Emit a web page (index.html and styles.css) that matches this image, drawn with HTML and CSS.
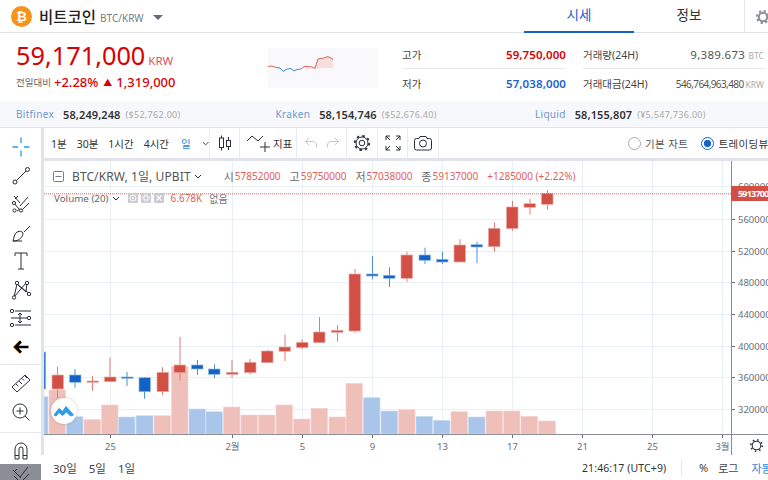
FILE: index.html
```html
<!DOCTYPE html>
<html lang="ko">
<head>
<meta charset="utf-8">
<title>비트코인 BTC/KRW</title>
<link rel="stylesheet" href="styles.css">
</head>
<body>
<div class="page">
  <header class="top">
    <div class="coin">
      <span class="coin-logo">₿</span>
      <span class="coin-name">비트코인</span>
      <span class="coin-pair">BTC/KRW</span>
      <span class="coin-caret"></span>
    </div>
    <nav class="tabs">
      <a class="tab tab-on">시세</a>
      <a class="tab">정보</a>
    </nav>
    <div class="top-gear">
      <svg width="16" height="16" viewBox="0 0 16 16"><circle cx="8" cy="8" r="4.2" fill="none" stroke="#8b8f99" stroke-width="2"/><circle cx="8" cy="8" r="6" fill="none" stroke="#8b8f99" stroke-width="2.2" stroke-dasharray="2.2 2.5"/></svg>
    </div>
  </header>

  <section class="summary">
    <div class="price-block">
      <div class="price-line"><span class="price">59,171,000</span><span class="price-unit">KRW</span></div>
      <div class="change-line"><span class="change-label">전일대비</span><span class="change-val">+2.28%</span><span class="change-tri">▲</span><span class="change-val">1,319,000</span></div>
    </div>
    <div class="spark">
      <svg width="110" height="40" viewBox="0 0 110 40">
        <path class="spark-area" d="M38 22 L46 20 L50 11 L56 10 L60 8.5 L65 10 L65 20 L38 20Z"/>
        <polyline class="spark-red" points="0,18.5 4,18 8,19.5"/>
        <polyline class="spark-blue" points="8,19.5 12,20 15,23.5 19,21 23,20.5 26,23 29,21.5 33,21"/>
        <polyline class="spark-red" points="33,21 36,18.5 40,18.5 44,19 47,20.5 50,11 56,10 60,8.5 65,11.5"/>
      </svg>
    </div>
    <div class="stats">
      <div class="stat"><span class="stat-label">고가</span><span class="stat-val is-red">59,750,000</span></div>
      <div class="stat"><span class="stat-label">거래량(24H)</span><span class="stat-num">9,389.673 <i class="stat-unit">BTC</i></span></div>
      <div class="stat"><span class="stat-label">저가</span><span class="stat-val is-blue">57,038,000</span></div>
      <div class="stat"><span class="stat-label">거래대금(24H)</span><span class="stat-long">546,764,963,480 <i class="stat-unit">KRW</i></span></div>
    </div>
  </section>

  <section class="exchanges">
    <div class="ex"><span class="ex-name">Bitfinex</span><b class="ex-price">58,249,248</b><span class="ex-sub">($52,762.00)</span></div>
    <div class="ex"><span class="ex-name">Kraken</span><b class="ex-price">58,154,746</b><span class="ex-sub">($52,676.40)</span></div>
    <div class="ex"><span class="ex-name">Liquid</span><b class="ex-price">58,155,807</b><span class="ex-sub">(¥5,547,736.00)</span></div>
  </section>

  <section class="terminal">
    <aside class="tools">
      <div class="tool-group tool-group-a">
        <div class="tool"><svg width="24" height="24" viewBox="0 0 24 24"><path class="ico-blue" d="M3.5 12H9M15 12h5.5M12 2.5V8M12 15.500V21.500"/></svg></div>
        <div class="tool"><svg width="24" height="24" viewBox="0 0 24 24"><path class="ico" d="M7.500 16.500 17 7"/><circle class="ico" cx="6" cy="18" r="2"/><circle class="ico" cx="18.500" cy="5.500" r="2"/></svg></div>
        <div class="tool"><svg width="24" height="24" viewBox="0 0 24 24"><path class="ico" d="M5 4l6 7M9 4 6 7M4 10l6 7M19 5l-8 9M20 11l-7 7M8 19l3-2"/><circle class="ico-fill" cx="5" cy="11" r="1.600"/><circle class="ico-fill" cx="5.500" cy="18.500" r="1.600"/><circle class="ico-fill" cx="12" cy="18.500" r="1.600"/></svg></div>
        <div class="tool"><svg width="24" height="24" viewBox="0 0 24 24"><path class="ico" d="M4 20c1-3 1-7 4-9 3-1.500 5-.5 6 1 0 3-2 6-6 7.500-1.500.5-3 .5-4 .5ZM15 11l6-6M4 20h9"/></svg></div>
        <div class="tool"><svg width="24" height="24" viewBox="0 0 24 24"><path class="ico" d="M6 7V4h12v3M12 4v16M9 20h6"/></svg></div>
        <div class="tool"><svg width="24" height="24" viewBox="0 0 24 24"><path class="ico" d="M5 19 8 6l9 8 1-9M8 6l10 8 2 1M5 19l12-14"/><circle class="ico-fill" cx="8" cy="5" r="1.700"/><circle class="ico-fill" cx="18" cy="5" r="1.700"/><circle class="ico-fill" cx="5" cy="19.500" r="1.700"/><circle class="ico-fill" cx="20" cy="16" r="1.700"/></svg></div>
        <div class="tool"><svg width="24" height="24" viewBox="0 0 24 24"><path class="ico" d="M6 5h16M2 12h16M6 19h16M11 7v10M9 9l2-2 2 2M9 15l2 2 2-2"/><circle class="ico-fill" cx="3" cy="5" r="1.700"/><circle class="ico-fill" cx="20" cy="12" r="1.700"/><circle class="ico-fill" cx="3" cy="19" r="1.700"/></svg></div>
        <div class="tool"><svg width="24" height="24" viewBox="0 0 24 24"><path class="ico-arrow-shadow" d="M19 12H6M11 6 5 12l6 6"/><path class="ico-arrow" d="M19.500 12H7M12 6.500 6.500 12l5.500 5.500"/></svg></div>
      </div>
      <div class="tool-group tool-group-b">
        <div class="tool"><svg width="24" height="24" viewBox="0 0 24 24"><path class="ico" d="M3 16 16 4l5 5L8 21ZM7 13l2 2M10 10l3 3M13 7.500l2 2M16 5l2 2"/></svg></div>
        <div class="tool"><svg width="24" height="24" viewBox="0 0 24 24"><circle class="ico" cx="11" cy="11" r="7"/><path class="ico" d="M11 7.500v7M7.500 11h7M16 16l4.500 4.500"/></svg></div>
      </div>
      <div class="tool-group tool-group-c">
        <div class="tool"><svg width="24" height="24" viewBox="0 0 24 24"><path class="ico" d="M6 21V11a6 6 0 0 1 12 0v10h-4V11a2 2 0 0 0-4 0v10ZM6 17.500h4M14 17.500h4"/></svg></div>
      </div>
      <div class="tool-active"><svg width="24" height="16" viewBox="0 0 24 16"><path class="ico-white" d="M4 6l8 8M8 5l-2 2M5 12l4 4M19 3l-8 10M20 10l-6 6"/></svg></div>
    </aside>

    <div class="workspace">
      <div class="toolbar">
        <div class="tb-cell tb-res">
          <span>1분</span><span>30분</span><span>1시간</span><span>4시간</span><span class="tb-on">일</span>
          <svg class="tb-chev" width="8" height="5" viewBox="0 0 8 5"><path class="ico" d="M1 1l3 3 3-3"/></svg>
        </div>
        <div class="tb-cell tb-candle"><svg width="18" height="18" viewBox="0 0 18 18"><path class="ico" d="M5.500 1.500v15M12.500 3v13"/><rect class="ico-white-fill" x="3.500" y="4" width="4" height="9.500"/><rect class="ico-white-fill" x="10.500" y="6.500" width="4" height="6"/></svg></div>
        <div class="tb-cell tb-ind"><svg width="26" height="20" viewBox="0 0 26 20"><path class="ico" d="M1 8l5-5 6 5 5-5M19 9v10M14 14h10"/></svg><span>지표</span></div>
        <div class="tb-cell tb-hist">
          <svg width="14" height="12" viewBox="0 0 14 12"><path class="ico-grey" d="M5 1 1.500 4.500 5 8M2 4.500h6.500c2.500 0 4 1.500 4 3.500v2.500"/></svg>
          <svg width="14" height="12" viewBox="0 0 14 12"><path class="ico-grey" d="M9 1l3.500 3.500L9 8M12 4.500H5.500c-2.500 0-4 1.500-4 3.500v2.500"/></svg>
        </div>
        <div class="tb-cell tb-icon tb-gear"><svg width="18" height="18" viewBox="0 0 18 18"><circle class="ico" cx="9" cy="9" r="2.800"/><circle class="ico" cx="9" cy="9" r="6"/><circle cx="9" cy="9" r="7.200" fill="none" stroke="#2a2e39" stroke-width="1.800" stroke-dasharray="2.600 3.050"/></svg></div>
        <div class="tb-cell tb-icon tb-full"><svg width="16" height="16" viewBox="0 0 16 16"><path class="ico" d="M1 5V1h4M1 1l4 4M11 1h4v4M15 1l-4 4M1 11v4h4M1 15l4-4M11 15h4v-4M15 15l-4-4"/></svg></div>
        <div class="tb-cell tb-icon tb-cam"><svg width="20" height="16" viewBox="0 0 20 16"><path class="ico" d="M1.500 5.500A2 2 0 0 1 3.500 3.500H6L7 1.500h6l1 2h2.500a2 2 0 0 1 2 2v7.500a2 2 0 0 1-2 2h-13a2 2 0 0 1-2-2Z"/><circle class="ico" cx="10" cy="8.500" r="3.500"/></svg></div>
        <div class="tb-right">
          <label class="radio"><span class="radio-dot"></span>기본 자트</label>
          <label class="radio"><span class="radio-dot radio-on"></span>트레이딩뷰</label>
        </div>
      </div>

      <div class="chart">
        <svg class="chart-svg" width="724" height="294" viewBox="44 161 724 294">
          <g class="grid">
            <path d="M44 186.500H731M44 219.500H731M44 251.500H731M44 282.500H731M44 314.500H731M44 346.500H731M44 377.500H731M44 409.500H731"/>
            <path d="M110.500 161V434M232.500 161V434M302.500 161V434M372.500 161V434M442.500 161V434M512.500 161V434M582.500 161V434M652.500 161V434M722.500 161V434"/>
          </g>
          <g class="vol-up">
            <rect x="49" y="390" width="16.500" height="44"/><rect x="84" y="419.500" width="16.500" height="14.500"/><rect x="101.500" y="405" width="16.500" height="29"/><rect x="154" y="415.700" width="16.500" height="18.300"/><rect x="171.500" y="366.700" width="16.500" height="67.300"/><rect x="223.500" y="407" width="16.500" height="27"/><rect x="241" y="415" width="16.500" height="19"/><rect x="258.500" y="415" width="16.500" height="19"/><rect x="276" y="405" width="16.500" height="29"/><rect x="293.500" y="419" width="16.500" height="15"/><rect x="311" y="408.300" width="16.500" height="25.700"/><rect x="329" y="417" width="16.500" height="17"/><rect x="346" y="383.300" width="16.500" height="50.700"/><rect x="398.500" y="409.700" width="16.500" height="24.300"/><rect x="451" y="411.700" width="16.500" height="22.300"/><rect x="486" y="411" width="16.500" height="23"/><rect x="503.500" y="411" width="16.500" height="23"/><rect x="521" y="416.300" width="16.500" height="17.700"/><rect x="538.500" y="421" width="17" height="13"/>
          </g>
          <g class="vol-down">
            <rect x="44" y="396.700" width="4" height="37.300"/><rect x="66.500" y="416.700" width="16.500" height="17.300"/><rect x="118.500" y="417" width="16.500" height="17"/><rect x="136" y="415.700" width="17" height="18.300"/><rect x="189" y="409" width="16.500" height="25"/><rect x="206" y="411.700" width="16.500" height="22.300"/><rect x="363.500" y="397.700" width="16.500" height="36.300"/><rect x="381" y="411" width="16.500" height="23"/><rect x="416" y="416.300" width="16.500" height="17.700"/><rect x="433.500" y="420.300" width="16.500" height="13.700"/><rect x="468.500" y="417" width="16.500" height="17"/>
          </g>
          <g class="wick-up">
            <rect x="57" y="366.700" width="1" height="31.300"/><rect x="92" y="375.700" width="1" height="15.300"/><rect x="109.500" y="357.700" width="1" height="24"/><rect x="162" y="367.300" width="1" height="27.700"/><rect x="179.500" y="336.700" width="1" height="44"/><rect x="231.500" y="360" width="1" height="17.700"/><rect x="249.500" y="359" width="1" height="15.300"/><rect x="267" y="350" width="1" height="12.700"/><rect x="284.500" y="334.300" width="1" height="26.700"/><rect x="301.500" y="339.300" width="1" height="10"/><rect x="319" y="317" width="1" height="25.700"/><rect x="337" y="325" width="1" height="16.700"/><rect x="354.500" y="269" width="1" height="64"/><rect x="406.500" y="251.700" width="1" height="30"/><rect x="459.500" y="239.300" width="1" height="22.700"/><rect x="494" y="222.300" width="1" height="29.400"/><rect x="512" y="201" width="1" height="29.700"/><rect x="529.500" y="199" width="1" height="15.700"/><rect x="547" y="190" width="1" height="19.700"/>
          </g>
          <g class="wick-down">
            <rect x="74.500" y="369" width="1" height="18.700"/><rect x="126.500" y="372" width="1" height="14"/><rect x="144" y="377" width="1" height="21.700"/><rect x="197" y="360" width="1" height="15"/><rect x="214" y="364.300" width="1" height="14"/><rect x="372" y="256" width="1" height="23.300"/><rect x="389" y="267.300" width="1" height="19.700"/><rect x="424.500" y="247.700" width="1" height="16.300"/><rect x="442" y="251.700" width="1" height="12.300"/><rect x="476.500" y="241.700" width="1" height="21.600"/>
          </g>
          <g class="body-up">
            <rect x="52" y="375" width="11.500" height="14"/><rect x="87" y="381" width="11.500" height="1.300"/><rect x="104.500" y="377" width="11.500" height="4.700"/><rect x="157" y="372.300" width="11.500" height="19.400"/><rect x="174" y="365" width="11.500" height="7.700"/><rect x="226.500" y="372.300" width="11.500" height="2"/><rect x="244.500" y="362.300" width="11.500" height="10.400"/><rect x="261.500" y="351" width="11.500" height="11.700"/><rect x="279" y="347" width="11.500" height="4.300"/><rect x="296.500" y="342.300" width="11.500" height="5.400"/><rect x="313.500" y="332" width="11.500" height="10.700"/><rect x="331.500" y="330.300" width="11.500" height="2"/><rect x="349" y="274" width="11.500" height="57"/><rect x="401" y="255" width="11.500" height="23.300"/><rect x="454" y="245" width="11.500" height="17"/><rect x="488.500" y="228.300" width="11.500" height="18.400"/><rect x="506.500" y="207" width="11.500" height="21.700"/><rect x="524" y="203.700" width="11.500" height="3.600"/><rect x="541.500" y="193.300" width="11.500" height="11"/>
          </g>
          <g class="body-down">
            <rect x="44" y="352" width="1.700" height="37"/><rect x="69.500" y="375" width="11.500" height="7.300"/><rect x="121.500" y="377" width="11.500" height="1.300"/><rect x="139" y="377.700" width="11.500" height="14"/><rect x="191.500" y="365" width="11.500" height="4"/><rect x="208.500" y="369" width="11.500" height="5.300"/><rect x="366.500" y="274" width="11.500" height="2"/><rect x="383.500" y="275.300" width="11.500" height="3"/><rect x="419" y="255" width="11.500" height="5.300"/><rect x="436.500" y="259.300" width="11.500" height="2.700"/><rect x="471" y="244.700" width="11.500" height="2.300"/>
          </g>
          <path class="price-dots" d="M44 193.800H731"/>
          <path class="axis" d="M44 434.500H768M731.500 161V455"/>
          <path class="tick" d="M110.500 435v3M232.500 435v3M302.500 435v3M372.500 435v3M442.500 435v3M512.500 435v3M582.500 435v3M652.500 435v3M722.500 435v3M732 186.500h3M732 219.500h3M732 251.500h3M732 282.500h3M732 314.500h3M732 346.500h3M732 377.500h3M732 409.500h3"/>
          <g class="axis-text">
            <text x="738" y="190">60000000</text><text x="738" y="222.500">56000000</text><text x="738" y="254.500">52000000</text><text x="738" y="286">48000000</text><text x="738" y="318">44000000</text><text x="738" y="349.500">40000000</text><text x="738" y="381">36000000</text><text x="738" y="413">32000000</text>
          </g>
          <g class="axis-text axis-mid">
            <text x="110.500" y="450">25</text><text x="232.500" y="450">2월</text><text x="302.500" y="450">5</text><text x="372.500" y="450">9</text><text x="442.500" y="450">13</text><text x="512.500" y="450">17</text><text x="582.500" y="450">21</text><text x="652.500" y="450">25</text><text x="722.500" y="450">3월</text>
          </g>
          <rect class="price-box" x="731" y="186" width="37" height="15"/>
          <text class="price-box-text" x="738" y="197">59137000</text>
          <circle cx="756.500" cy="445.500" r="4.300" fill="none" stroke="#2a2e39" stroke-width="1.100"/>
          <circle cx="756.500" cy="445.500" r="5.700" fill="none" stroke="#2a2e39" stroke-width="1.600" stroke-dasharray="1.500 2.980"/>
        </svg>

        <div class="legend">
          <div class="legend-main">
            <svg class="legend-fold" width="11" height="11" viewBox="0 0 11 11"><rect x=".5" y=".5" width="10" height="10" rx="1" fill="none" stroke="#787b86"/><path d="M2.500 5.500h6" stroke="#787b86"/></svg>
            <span class="legend-title">BTC/KRW, 1일, UPBIT</span>
            <svg class="legend-chev" width="8" height="5" viewBox="0 0 8 5"><path class="ico" d="M1 1l3 3 3-3"/></svg>
            <div class="ohlc">
              <span>시<b>57852000</b></span><span>고<b>59750000</b></span><span>저<b>57038000</b></span><span>종<b>59137000</b></span><b>+1285000 (+2.22%)</b>
            </div>
          </div>
          <div class="legend-vol">
            <span class="vol-name">Volume (20)</span>
            <svg class="legend-chev" width="8" height="5" viewBox="0 0 8 5"><path class="ico" d="M1 1l3 3 3-3"/></svg>
            <span class="vol-btns">
              <svg class="vol-btn" width="10" height="10" viewBox="0 0 10 10"><circle cx="5" cy="5" r="3" fill="none" stroke="#fff"/><circle cx="5" cy="5" r="1" fill="#fff"/></svg>
              <svg class="vol-btn" width="10" height="10" viewBox="0 0 10 10"><circle cx="5" cy="5" r="2.200" fill="none" stroke="#fff"/><circle cx="5" cy="5" r="3.400" fill="none" stroke="#fff" stroke-dasharray="1.300 1.370"/></svg>
              <svg class="vol-btn" width="10" height="10" viewBox="0 0 10 10"><path d="M2.500 2.500l5 5M7.500 2.500l-5 5" stroke="#fff" stroke-width="1.200"/></svg>
            </span>
            <span class="vol-val">6.678K</span>
            <span class="vol-none">없음</span>
          </div>
        </div>

        <div class="logo-badge"><svg width="22" height="12" viewBox="0 0 22 12"><path d="M1 10 6 3.500l3.500 3L13 1.500l7.500 8.500-3 1-4-4-4 3.500-3.500-3-3 3.500Z" fill="#2e9de6" stroke="#2e9de6" stroke-linejoin="round"/></svg></div>
        <div class="collapse-handle">‹</div>
      </div>

      <footer class="bottom">
        <div class="ranges"><span>30일</span><span>5일</span><span>1일</span></div>
        <div class="bottom-right">
          <span class="clock">21:46:17 (UTC+9)</span>
          <span class="bottom-sep"></span>
          <span class="opt">%</span>
          <span class="opt opt-log">로그</span>
          <span class="opt opt-on">자동</span>
        </div>
      </footer>
    </div>
  </section>
</div>
</body>
</html>
```
FILE: styles.css
```css
* { box-sizing: border-box; }
html, body { margin: 0; padding: 0; background: #fff; }
body { font-family: "Noto Sans", "Noto Sans CJK KR", sans-serif; color: #333; }
i { font-style: normal; }
.page { width: 768px; height: 480px; overflow: hidden; display: flex; flex-direction: column; }

/* header */
.top { height: 33px; flex: none; display: flex; border-bottom: 1px solid #dfe1e8; }
.coin { width: 524px; display: flex; align-items: center; padding-left: 11px; height: 32px; }
.coin-logo { width: 21px; height: 21px; border-radius: 50%; background: #f7931a; color: #fff; font: bold 13px/21px "DejaVu Sans", sans-serif; text-align: center; }
.coin-name { margin-left: 7px; font-size: 15.500px; font-weight: 500; color: #222; }
.coin-pair { margin-left: 4px; margin-top: 3px; font-size: 10px; color: #777b86; }
.coin-caret { margin-left: 9px; margin-top: 2px; width: 0; height: 0; border-left: 5px solid transparent; border-right: 5px solid transparent; border-top: 5px solid #666a77; }
.tabs { display: flex; width: 220px; }
.tab { width: 110px; height: 33px; text-align: center; font-size: 13.500px; line-height: 30px; color: #333; }
.tab-on { color: #1763c6; border-bottom: 2px solid #1763c6; }
.top-gear { flex: 1; border-left: 1px solid #e5e7ec; height: 32px; padding: 8px 0 0 10px; overflow: hidden; }

/* summary */
.summary { height: 68px; flex: none; display: flex; }
.price-block { width: 268px; padding: 5px 0 0 16px; }
.price-line { display: flex; align-items: baseline; height: 34px; }
.price { font-size: 25.300px; line-height: 34px; color: #d90000; }
.price-unit { margin-left: 3px; font-size: 11.500px; color: #e0505a; }
.change-line { display: flex; align-items: center; height: 18px; margin-top: 1px; }
.change-label { font-size: 9.500px; color: #666; margin-right: 3px; }
.change-val { font-size: 13px; font-weight: 500; color: #d90000; }
.change-tri { font-size: 9px; color: #d90000; margin: 0 4px 0 5px; }
.spark { width: 110px; height: 40px; margin-top: 15px; background: #f9f9fb; }
.spark svg { display: block; }
.spark-area { fill: #f7dfdd; }
.spark-red, .spark-blue { fill: none; stroke-width: 1; }
.spark-red { stroke: #d9635c; }
.spark-blue { stroke: #3f86d8; }
.stats { margin: 7px 0 0 24px; display: grid; grid-template-columns: 164px 181px; column-gap: 17px; grid-auto-rows: 29px; align-content: start; }
.stat { display: flex; justify-content: space-between; align-items: center; font-size: 10.500px; color: #444; white-space: nowrap; }
.stat:nth-child(-n+2) { border-bottom: 1px solid #e6e8ec; }
.stat-val { font-size: 11.500px; font-weight: 600; letter-spacing: .1px; }
.is-red { color: #d90000; }
.is-blue { color: #1c62cc; }
.stat-num { font-size: 11.500px; color: #555; letter-spacing: .3px; }
.stat-long { font-size: 10px; color: #555; letter-spacing: -.6px; }
.stat-unit { font-size: 8.500px; color: #aaa; letter-spacing: 0; }

/* exchanges */
.exchanges { height: 26px; flex: none; display: grid; grid-template-columns: repeat(3, 259.500px); padding-left: 16px; background: #f6f8fb; align-items: center; }
.ex { display: flex; align-items: center; white-space: nowrap; }
.ex-name { font-size: 10px; color: #6e99cc; letter-spacing: .3px; margin-right: 9px; }
.ex-price { font-size: 11px; font-weight: 600; color: #333; letter-spacing: .1px; }
.ex-sub { margin-left: 5px; font-size: 9px; color: #aaa; letter-spacing: .3px; }

/* terminal */
.terminal { flex: 1; min-height: 0; display: flex; border-top: 1px solid #e0e3eb; }
.tools { width: 41px; flex: none; display: flex; flex-direction: column; padding-top: 5px; }
.tool { height: 28.500px; display: flex; align-items: center; justify-content: center; }
.tool-group-a { height: 231px; }
.tool-group-b { padding-top: 4px; border-top: 1px solid #e6e8ec; height: 68px; }
.tool-group-c { border-top: 1px solid #e6e8ec; height: 32px; padding-top: 3px; }
.tool-active { height: 16px; background: #8b8e97; display: flex; justify-content: center; overflow: hidden; }
.ico, .ico-blue, .ico-grey, .ico-white, .ico-arrow, .ico-arrow-shadow { fill: none; stroke-width: 1; }
.ico { stroke: #2a2e39; }
.ico-fill { fill: #fff; stroke: #2a2e39; }
.ico-blue { stroke: #2a9ae6; stroke-width: 1.300; }
.ico-grey { stroke: #c3c6cf; }
.ico-white { stroke: #2a2e39; }
.ico-white-fill { fill: #fff; stroke: #2a2e39; }
.ico-arrow { stroke: #000; stroke-width: 2.600; }
.ico-arrow-shadow { stroke: #f0a030; stroke-width: 2; }

.workspace { flex: 1; min-width: 0; display: flex; flex-direction: column; }
.toolbar { height: 30px; flex: none; display: flex; align-items: stretch; border-left: 3px solid #e0e3eb; }
.tb-cell { display: flex; align-items: center; flex: none; border-right: 1px solid #e9ebef; font-size: 10.500px; color: #333; white-space: nowrap; }
.tb-res { width: 166px; padding-left: 7px; gap: 10px; }
.tb-on { color: #2a86e0; margin-left: 2px; }
.tb-chev { margin-left: 1px; }
.tb-candle { width: 30px; justify-content: center; }
.tb-ind { width: 57px; padding-left: 6px; gap: 1px; font-size: 10.500px; }
.tb-hist { width: 50px; justify-content: center; gap: 8px; }
.tb-icon { justify-content: center; }
.tb-gear { width: 31px; }
.tb-full { width: 30px; }
.tb-cam { width: 31px; }
.tb-right { margin-left: auto; display: flex; align-items: center; gap: 13px; margin-right: 0; width: 140px; flex: none; white-space: nowrap; overflow: hidden; }
.radio { display: flex; align-items: center; gap: 4px; font-size: 10.500px; color: #555; letter-spacing: .4px; flex: none; }
.radio-dot { width: 13px; height: 13px; border-radius: 50%; border: 1.500px solid #a8abb3; flex: none; }
.radio-on { border-color: #1763c6; background: radial-gradient(circle, #1763c6 0 3.400px, #fff 3.900px); }
.radio:last-child { color: #333; }

.chart { position: relative; height: 297px; flex: none; border-top: 3px solid #e0e3eb; border-left: 3px solid #e0e3eb; overflow: hidden; }
.chart-svg { display: block; }
.grid path { fill: none; stroke: #e8f0f7; stroke-width: 1; }
.vol-up rect { fill: #efbfba; stroke: #f5d5d2; stroke-width: .6; }
.vol-down rect { fill: #a9c6ea; stroke: #c9dcf3; stroke-width: .6; }
.wick-up rect { fill: #dc7f78; }
.wick-down rect { fill: #4f8edb; }
.body-up rect { fill: #d24f45; stroke: #eba9a3; stroke-width: .7; }
.body-down rect { fill: #1261c4; stroke: #8fb6e6; stroke-width: .7; }
.price-dots { stroke: #d9635c; stroke-width: 1; stroke-dasharray: 1 1; fill: none; }
.axis { stroke: #8a8d94; stroke-width: 1; fill: none; }
.tick { stroke: #6a6d75; stroke-width: 1; fill: none; }
.axis-text text { font-size: 9.500px; fill: #6a6d75; }
.axis-mid text { text-anchor: middle; }
.price-box { fill: #d24f45; }
.price-box-text { font-size: 9px; font-weight: 700; fill: #fff; letter-spacing: -.8px; }

.legend { position: absolute; left: 9px; top: 6px; width: 560px; }
.legend-main { display: flex; align-items: center; height: 18px; }
.legend-fold { flex: none; }
.legend-title { margin-left: 8px; font-size: 12px; color: #555; letter-spacing: .1px; white-space: nowrap; }
.legend-chev { margin-left: 3px; flex: none; }
.ohlc { margin-left: 22px; display: flex; gap: 9px; align-items: center; font-size: 10px; color: #666; white-space: nowrap; }
.ohlc span { display: flex; align-items: center; gap: 1px; font-size: 11px; }
.ohlc b { font-size: 10px; font-weight: 400; color: #e0605a; }
.legend-vol { display: flex; align-items: center; height: 16px; margin-top: 5px; margin-left: 1px; }
.vol-name { font-size: 9.800px; color: #666; white-space: nowrap; }
.vol-btns { display: flex; gap: 3px; margin-left: 8px; }
.vol-btn { display: block; background: #c9cbd1; border-radius: 1px; }
.vol-val { margin-left: 7px; font-size: 10px; color: #e0605a; }
.vol-none { margin-left: 7px; font-size: 10px; color: #777; }

.logo-badge { position: absolute; left: 7px; top: 237px; width: 26px; height: 26px; border-radius: 50%; background: #fff; box-shadow: 0 0 3px rgba(0,0,0,.2); display: flex; align-items: center; justify-content: center; }
.collapse-handle { position: absolute; left: -8px; top: 256px; width: 7px; height: 20px; background: #fff; border: 1px solid #e6e8ec; border-radius: 3px; font-size: 8px; line-height: 18px; color: #a8abb3; text-align: center; }

.bottom { flex: 1; min-height: 0; display: flex; justify-content: space-between; align-items: center; padding: 0 0 0 12px; font-size: 10.500px; color: #444; white-space: nowrap; overflow: hidden; }
.ranges { display: flex; gap: 12px; font-size: 11.500px; }
.bottom-right { display: flex; align-items: center; width: 186px; flex: none; }
.clock { color: #333; width: 99px; flex: none; letter-spacing: .1px; }
.bottom-sep { width: 1px; height: 16px; flex: none; background: #e6e8ec; margin-right: 17px; }
.opt { flex: none; margin-right: 10px; font-size: 11px; }
.opt-log { margin-right: 13px; }
.opt-on { color: #2a86e0; margin-right: 0; }
```
